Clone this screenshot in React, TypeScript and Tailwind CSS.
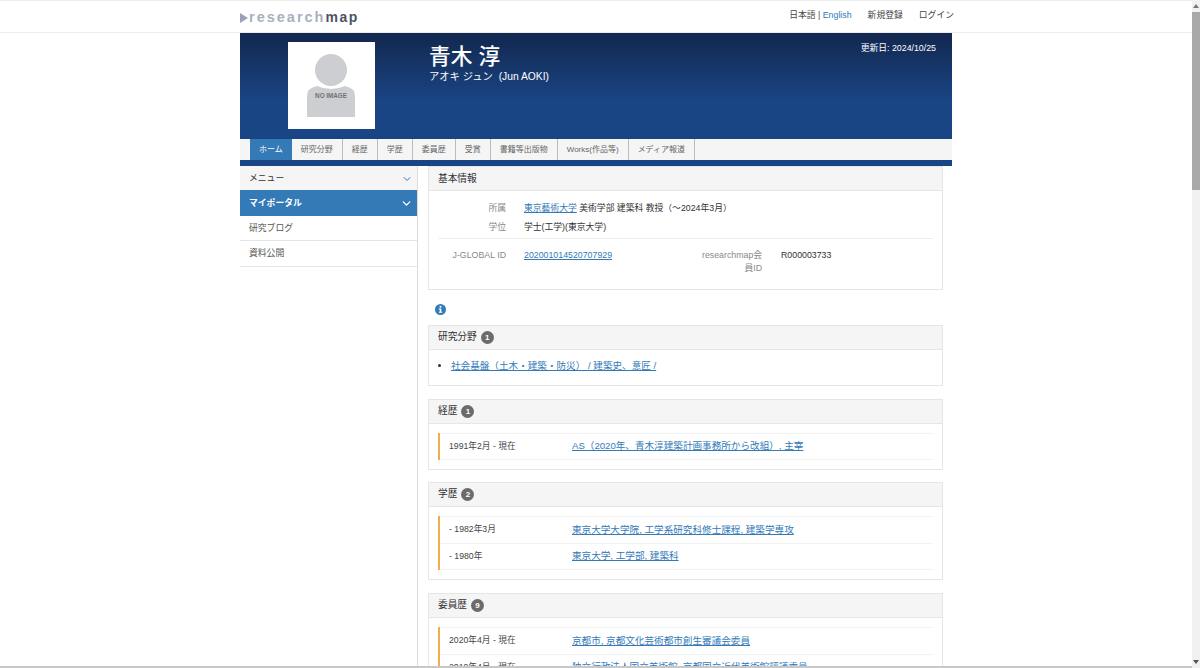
import React, {ReactNode} from 'react';
import {ChevronDown} from 'lucide-react';

const tabs = ['ホーム', '研究分野', '経歴', '学歴', '委員歴', '受賞', '書籍等出版物', 'Works(作品等)', 'メディア報道'];

const linkClass = 'text-[#337ab7] underline';

function Badge({count}: {count: number}) {
  return (
    <span className="ml-[4px] inline-flex h-[13px] min-w-[13px] items-center justify-center rounded-full bg-[#6b6b6b] px-[3px] text-[8px] font-bold leading-none text-white">
      {count}
    </span>
  );
}

function Card({title, count, className, headerClass, children}: {title: string; count?: number; className?: string; headerClass?: string; children: ReactNode}) {
  return (
    <section className={`border border-[#e6e6e6] ${className ?? ''}`}>
      <h2 className={`flex h-[24px] items-center border-b border-[#e6e6e6] bg-[#f5f5f5] pl-[9px] text-[9.700px] font-normal text-[#333] ${headerClass ?? ''}`}>
        {title}
        {count !== undefined && <Badge count={count}/>}
      </h2>
      {children}
    </section>
  );
}

function Timeline({rows}: {rows: [string, string][]}) {
  return (
    <ul className="border-l-2 border-[#f0ad4e]">
      {rows.map(([date, text]) => (
        <li key={date} className="flex h-[27px] items-center border-t border-[#f2f2f2] pl-[9px] last:border-b">
          <span className="w-[123px] shrink-0 text-[8.700px] text-[#444]">{date}</span>
          <a className={`${linkClass} text-[9.600px]`}>{text}</a>
        </li>
      ))}
    </ul>
  );
}

function Avatar() {
  return (
    <div className="flex h-[87px] w-[87px] items-center justify-center bg-white">
      <svg width="87" height="87" viewBox="0 0 87 87">
        <circle cx="43" cy="28" r="16" fill="#cdced2"/>
        <path d="M19 75 V54 Q19 46 29 44 Q36 47 43 47 Q50 47 57 44 Q67 46 67 54 V75 Z" fill="#cdced2"/>
        <text x="43" y="56" textAnchor="middle" fontSize="6.300" fontWeight="700" fill="#6f7177">NO IMAGE</text>
      </svg>
    </div>
  );
}

export default function App() {
  return (
    <div className="flex h-[668px] w-[1200px] overflow-hidden bg-white text-[#333] [font-family:'Liberation_Sans','Noto_Sans_CJK_JP',sans-serif]">
      <div className="flex min-w-0 flex-1 flex-col">
        <header className="h-[33px] shrink-0 border-y border-[#ececec]">
          <div className="mx-auto flex h-full w-[712px] items-center justify-between">
            <div className="flex items-center pt-[2px]">
              <span className="mr-[1px] h-0 w-0 border-y-[5px] border-l-[8px] border-y-transparent border-l-[#9aa3b5]"/>
              <span className="text-[14.500px] font-bold tracking-[2px] text-[#a9b0c0]">research</span>
              <span className="text-[14px] font-bold tracking-[1.500px] text-[#4b5363]">map</span>
            </div>
            <nav className="flex items-center pb-[2px] text-[8.800px] text-[#444]">
              <span>日本語 | <a className="text-[#337ab7]">English</a></span>
              <a className="ml-[16px]">新規登録</a>
              <a className="ml-[16px] mr-[-2px]">ログイン</a>
            </nav>
          </div>
        </header>

        <div className="mx-auto flex w-[712px] flex-1 flex-col overflow-hidden">
          <div className="flex h-[106px] shrink-0 bg-gradient-to-b from-[#12284f] from-0% to-[#1a4585] to-65% text-white">
            <div className="ml-[48px] mt-[9px]">
              <Avatar/>
            </div>
            <div className="ml-[54px] mt-[10px]">
              <h1 className="text-[21.700px] font-medium leading-[28px]">青木 淳</h1>
              <p className="text-[10.300px] leading-[12px]">アオキ ジュン&nbsp; (Jun AOKI)</p>
            </div>
            <p className="ml-auto mr-[16px] mt-[9px] text-[8.800px] leading-[12px]">更新日: 2024/10/25</p>
          </div>

          <nav className="flex h-[21px] shrink-0 bg-[#f5f5f5] pl-[10px]">
            {tabs.map((tab, i) => (
              <a key={tab}
                className={`flex items-center border-r border-[#bbb] px-[9px] text-[8px] ${i === 0 ? 'border-r-0 bg-[#337ab7] text-white' : 'text-[#666]'}`}>
                {tab}
              </a>
            ))}
          </nav>
          <div className="h-[6px] shrink-0 bg-[#1a4585]"/>

          <div className="flex min-h-0 flex-1">
            <aside className="w-[178px] shrink-0 border-r border-[#ddd]">
              <div className="flex h-[24px] items-center justify-between bg-[#f5f5f5] pl-[9px] pr-[4px] pt-[1px] text-[8.800px] text-[#333]">
                メニュー
                <ChevronDown size={12} className="text-[#337ab7]"/>
              </div>
              <div className="flex h-[26px] items-center justify-between bg-[#337ab7] pl-[9px] pr-[4px] pt-[1px] text-[8.800px] font-bold text-white">
                マイポータル
                <ChevronDown size={13} strokeWidth={2.500}/>
              </div>
              <div className="flex h-[25px] items-center border-b border-[#e6e6e6] pl-[9px] pt-[1px] text-[8.800px] text-[#555]">研究ブログ</div>
              <div className="flex h-[26px] items-center border-b border-[#e6e6e6] pl-[9px] pt-[1px] text-[8.800px] text-[#555]">資料公開</div>
            </aside>

            <main className="ml-[10px] w-[515px] shrink-0">
              <Card title="基本情報" className="h-[124px]" headerClass="pt-[1px]">
                <div className="mx-[9px] pt-[8px] text-[8.800px]">
                  <dl className="h-[40px] border-b border-[#eee]">
                    <div className="flex h-[19px] items-center">
                      <dt className="w-[68px] text-right text-[#888]">所属</dt>
                      <dd className="ml-[18px]"><a className={linkClass}>東京藝術大学</a> 美術学部 建築科 教授（〜2024年3月）</dd>
                    </div>
                    <div className="flex h-[19px] items-center">
                      <dt className="w-[68px] text-right text-[#888]">学位</dt>
                      <dd className="ml-[18px]">学士(工学)(東京大学)</dd>
                    </div>
                  </dl>
                  <div className="flex pt-[10px] leading-[13px]">
                    <span className="w-[68px] text-right text-[#888]">J-GLOBAL ID</span>
                    <a className={`${linkClass} ml-[18px] w-[178px]`}>202001014520707929</a>
                    <span className="w-[60px] whitespace-nowrap text-right text-[#888]">researchmap会<br/>員ID</span>
                    <span className="ml-[19px]">R000003733</span>
                  </div>
                </div>
              </Card>

              <div className="flex h-[35px] items-center pl-[7px] pt-[4px]">
                <svg width="11" height="11" viewBox="0 0 11 11">
                  <circle cx="5.500" cy="5.500" r="5.500" fill="#337ab7"/>
                  <circle cx="5.500" cy="2.800" r="1" fill="#fff"/>
                  <path d="M3.800 4.500 H6.300 V7.700 H7.200 V8.700 H3.800 V7.700 H4.700 V5.500 H3.800 Z" fill="#fff"/>
                </svg>
              </div>

              <Card title="研究分野" count={1} className="h-[61px]">
                <ul className="list-disc pl-[22px] pt-[9px] text-[9.600px]">
                  <li><a className={linkClass}>社会基盤（土木・建築・防災） / 建築史、意匠 /</a></li>
                </ul>
              </Card>

              <Card title="経歴" count={1} className="mt-[13px] h-[71px]">
                <div className="px-[9px] pt-[9px]">
                  <Timeline rows={[['1991年2月 - 現在', 'AS（2020年、青木淳建築計画事務所から改組）, 主宰']]}/>
                </div>
              </Card>

              <Card title="学歴" count={2} className="mt-[12px] h-[98px]">
                <div className="px-[9px] pt-[9px]">
                  <Timeline rows={[
                    ['- 1982年3月', '東京大学大学院, 工学系研究科修士課程, 建築学専攻'],
                    ['- 1980年', '東京大学, 工学部, 建築科'],
                  ]}/>
                </div>
              </Card>

              <Card title="委員歴" count={9} className="mt-[13px]">
                <div className="px-[9px] pt-[9px]">
                  <Timeline rows={[
                    ['2020年4月 - 現在', '京都市, 京都文化芸術都市創生審議会委員'],
                    ['2019年4月 - 現在', '独立行政法人国立美術館, 京都国立近代美術館評議委員'],
                  ]}/>
                </div>
              </Card>
            </main>
          </div>
        </div>
        <div className="h-[2px] shrink-0 bg-[#c8c8c8]"/>
      </div>

      <div className="flex w-[8px] shrink-0 flex-col items-center bg-[#f1f1f1]">
        <span className="mt-[4px] h-0 w-0 border-x-[3px] border-b-[4px] border-x-transparent border-b-[#777]"/>
        <span className="mt-[4px] h-[178px] w-full bg-[#a8a8a8]"/>
        <span className="mb-[4px] mt-auto h-0 w-0 border-x-[3px] border-t-[4px] border-x-transparent border-t-[#555]"/>
      </div>
    </div>
  );
}
